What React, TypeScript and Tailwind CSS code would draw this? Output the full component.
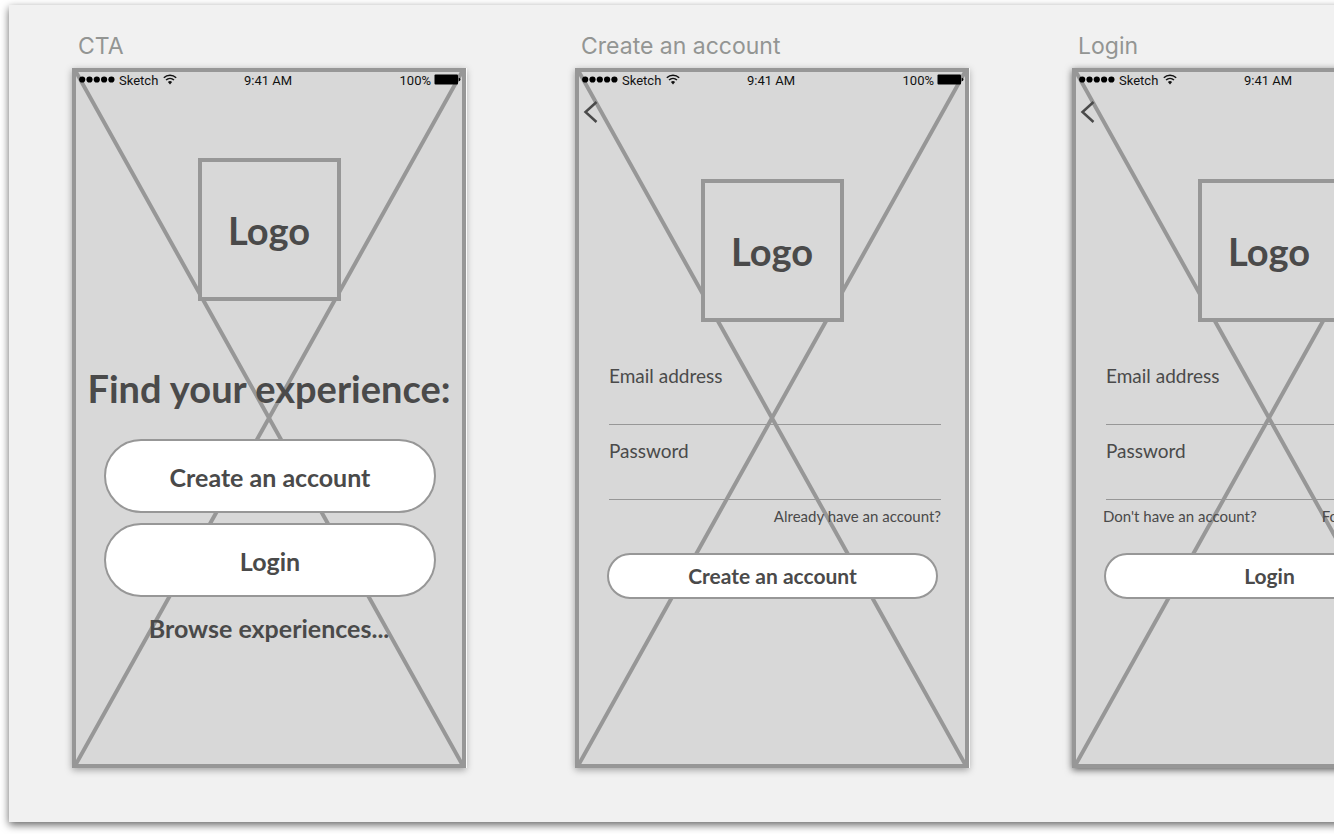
import type { ReactNode } from "react";

function WifiIcon() {
  return (
    <svg width="14" height="11" viewBox="0 0 14 11" fill="none" aria-hidden="true">
      <path d="M0.8 3.7A9 9 0 0 1 13.2 3.7" stroke="#111" strokeWidth="1.5" />
      <path d="M3 6.1A5.9 5.9 0 0 1 11 6.1" stroke="#111" strokeWidth="1.4" />
      <path d="M4.9 8.1A3 3 0 0 1 9.1 8.1L7 10.4Z" fill="#111" />
    </svg>
  );
}

function BatteryIcon() {
  return (
    <svg width="27" height="11" viewBox="0 0 27 11" aria-hidden="true">
      <rect x="0.5" y="0.5" width="23.5" height="10" rx="1" fill="#000" />
      <path d="M24.7 3.7C26 4 26.5 4.7 26.5 5.5S26 7 24.7 7.3Z" fill="#000" />
    </svg>
  );
}

function SignalDots() {
  return (
    <svg width="36" height="7" viewBox="0 0 36 7" aria-hidden="true">
      {[3.2, 10.5, 17.8, 25.1, 32.4].map((cx) => (
        <circle key={cx} cx={cx} cy="3.5" r="3.1" fill="#000" />
      ))}
    </svg>
  );
}

function StatusBar() {
  return (
    <div className="grid h-[18px] grid-cols-3 items-center pr-px pl-[3px] font-[Roboto,sans-serif] text-[13px] leading-4 text-[#111]">
      <div className="flex items-center gap-1">
        <div className="pb-1"><SignalDots /></div>
        <span>Sketch</span>
        <div className="pb-1 pl-px"><WifiIcon /></div>
      </div>
      <span className="pr-1 text-center">9:41 AM</span>
      <div className="flex items-center justify-end gap-[3px]">
        <span>100%</span>
        <div className="pb-1"><BatteryIcon /></div>
      </div>
    </div>
  );
}

function Logo() {
  return (
    <div className="mx-auto flex size-[143px] items-center justify-center border-4 border-[#979797] bg-[#d8d8d8] text-[38px] leading-[46px] font-bold">
      Logo
    </div>
  );
}

function Artboard({ title, children, active = false }: { title: string; children: ReactNode; active?: boolean }) {
  return (
    <section className="w-[394px] shrink-0">
      <h2 className="pl-1.5 font-[Inter,sans-serif] text-[23px] leading-8 text-[#939593]">{title}</h2>
      <div
        className={
          active
            ? "relative mt-1.5 h-[700px] border-4 border-[#979797] bg-[#d8d8d8] shadow-[0_2px_7px_rgba(0,0,0,0.6)]"
            : "relative mt-1.5 h-[700px] border-4 border-[#979797] bg-[#d8d8d8] shadow-[1px_0_0_#fafafa,0_2px_7px_rgba(0,0,0,0.35)]"
        }
      >
        <svg className="absolute inset-0 size-full" viewBox="0 0 386 692" preserveAspectRatio="none" aria-hidden="true">
          <path d="M0 0L386 692M386 0L0 692" stroke="#979797" strokeWidth="4" />
        </svg>
        <div className="relative font-[Lato,sans-serif] text-[#4a4a4a]">
          <StatusBar />
          {children}
        </div>
      </div>
    </section>
  );
}

function BackButton() {
  return (
    <button type="button" aria-label="Back" className="mt-2.5 ml-1 block">
      <svg width="15" height="24" viewBox="0 0 15 24" fill="none" aria-hidden="true">
        <path d="M13.5 2L2.5 12L13.5 22" stroke="#4a4a4a" strokeWidth="2.5" />
      </svg>
    </button>
  );
}

function Field({ id, label, type }: { id: string; label: string; type: string }) {
  return (
    <div>
      <label htmlFor={id} className="block text-[19px] leading-6">
        {label}
      </label>
      <input id={id} type={type} className="block h-[37px] w-full border-b border-[#979797] bg-transparent outline-none" />
    </div>
  );
}

function AccountForm({ prefix, action, children }: { prefix: string; action: string; children: ReactNode }) {
  return (
    <>
      <BackButton />
      <div className="mt-[55px]">
        <Logo />
      </div>
      <form className="mt-[42px]" onSubmit={(event) => event.preventDefault()}>
        <div className="flex flex-col gap-[14px] pr-6 pl-[30px]">
          <Field id={`${prefix}-email`} label="Email address" type="email" />
          <Field id={`${prefix}-password`} label="Password" type="password" />
        </div>
        <div className="mt-2 flex pr-6 pl-[27px] text-[15px] leading-4">{children}</div>
        <div className="mt-[29px] pr-[27px] pl-7">
          <button type="submit" className="block h-[46px] w-full rounded-full border-2 border-[#979797] bg-white text-[21px] font-bold">
            {action}
          </button>
        </div>
      </form>
    </>
  );
}

export default function App() {
  return (
    <main className="overflow-hidden bg-white pt-[5px] pb-3 pl-[9px]">
      <div className="-mr-4 flex bg-[#f1f1f1] pt-[25px] pb-[54px] pl-[63px] shadow-[0_3px_8px_rgba(0,0,0,0.6)]">
        <div className="flex gap-[103px]">
          <div className="pr-1.5">
            <Artboard title="CTA">
              <div className="mt-[68px]">
                <Logo />
              </div>
              <h1 className="mt-[63px] text-center text-[38px] leading-[48px] font-bold whitespace-nowrap">Find your experience:</h1>
              <div className="mt-[27px] flex flex-col gap-[10px] pr-[26px] pl-7">
                <button type="button" className="h-[74px] rounded-full border-2 border-[#979797] bg-white pt-[3px] text-[25px] font-bold">
                  Create an account
                </button>
                <button type="button" className="h-[74px] rounded-full border-2 border-[#979797] bg-white pt-[3px] text-[25px] font-bold">
                  Login
                </button>
              </div>
              <a href="#browse" className="mx-auto mt-[15px] block w-fit text-[25px] leading-8 font-bold">
                Browse experiences...
              </a>
            </Artboard>
          </div>
          <Artboard title="Create an account">
            <AccountForm prefix="create" action="Create an account">
              <a href="#login" className="ml-auto">
                Already have an account?
              </a>
            </AccountForm>
          </Artboard>
          <Artboard title="Login" active>
            <AccountForm prefix="login" action="Login">
              <a href="#create">Don't have an account?</a>
              <a href="#forgot" className="ml-auto">
                Forgot password?
              </a>
            </AccountForm>
          </Artboard>
        </div>
      </div>
    </main>
  );
}
